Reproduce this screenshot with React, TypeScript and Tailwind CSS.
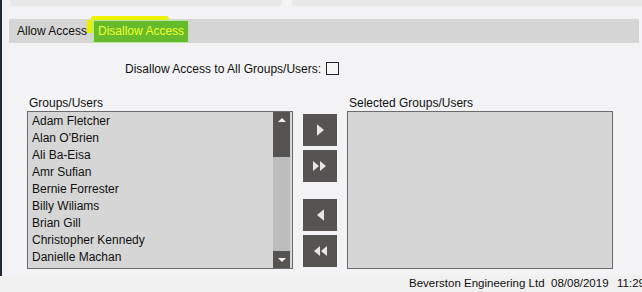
import React from "react";

const users = [
  "Adam Fletcher",
  "Alan O'Brien",
  "Ali Ba-Eisa",
  "Amr Sufian",
  "Bernie Forrester",
  "Billy Wiliams",
  "Brian Gill",
  "Christopher Kennedy",
  "Danielle Machan",
];

const MoveButton = ({ dir, double }: { dir: "right" | "left"; double?: boolean }) => {
  const single = dir === "right" ? "M0 0 L6 5 L0 10 Z" : "M6 0 L0 5 L6 10 Z";
  return (
    <button
      type="button"
      className="w-[34px] h-[32px] bg-[#565452] flex items-center justify-center"
    >
      {double ? (
        <svg width="14" height="10" viewBox="0 0 14 10">
          {dir === "right" ? (
            <>
              <path d="M0 0 L6 5 L0 10 Z" fill="#e6e6e6" />
              <path d="M7 0 L13 5 L7 10 Z" fill="#e6e6e6" />
            </>
          ) : (
            <>
              <path d="M7 0 L1 5 L7 10 Z" fill="#e6e6e6" />
              <path d="M14 0 L8 5 L14 10 Z" fill="#e6e6e6" />
            </>
          )}
        </svg>
      ) : (
        <svg width="7" height="12" viewBox="0 0 6 10">
          <path d={single} fill="#e6e6e6" />
        </svg>
      )}
    </button>
  );
};

export default function App() {
  return (
    <div
      className="w-[642px] h-[292px] flex flex-col bg-[#f3f3f5] text-[12px] text-[#111]"
      style={{ fontFamily: '"Liberation Sans", Arial, sans-serif' }}
    >
      <div className="h-[276px] border-l-2 border-[#1e2a35] flex flex-col">
        <div className="flex gap-[10px] pl-[8px]">
          <div className="w-[272px] h-[6px] bg-[#e8e8e8] rounded-b-[3px]" />
          <div className="flex-1 h-[6px] bg-[#e8e8e8] rounded-bl-[3px]" />
        </div>

        <div className="ml-[7px] mr-[3px] mt-[13px] h-[24px] bg-[#d5d5d5] flex items-end relative">
          <div className="absolute left-[82px] top-[-3px] w-[78px] h-[4px] bg-[#eef200] rounded-t-[3px]" />
          <div className="absolute left-[78px] top-[1px] w-[6px] h-[13px] bg-[#e6ef00]" />
          <span className="pl-[8px] pr-[6px] leading-[24px]">Allow Access</span>
          <div className="relative h-[23px] px-[4px] bg-[#66bb2c] border border-[#b9e6a0] text-[#f2ff2a] leading-[21px]">
            Disallow Access
          </div>
        </div>

        <div className="flex pl-[123px] mt-[17px] items-center">
          <span>Disallow Access to All Groups/Users:</span>
          <span className="ml-[5px] w-[13px] h-[13px] border border-[#222] bg-[#f7f7f7] mb-[1px]" />
        </div>

        <div className="flex mt-[18px] pl-[25px]">
          <div className="flex flex-col">
            <span className="pl-[2px] leading-[15px]">Groups/Users</span>
            <div className="w-[266px] h-[158px] border border-[#6b6b6b] bg-[#d6d6d6] flex">
              <ul className="flex-1 pl-[4px] pt-[1px]">
                {users.map((u) => (
                  <li key={u} className="leading-[17px]">
                    {u}
                  </li>
                ))}
              </ul>
              <div className="w-[17px] mr-[2px] bg-[#bdbdbd] flex flex-col justify-between">
                <div className="h-[45px] bg-[#555452] flex justify-center pt-[6px]">
                  <svg width="8" height="4" viewBox="0 0 8 4">
                    <path d="M0 4 L4 0 L8 4 Z" fill="#f0f0f0" />
                  </svg>
                </div>
                <div className="h-[17px] bg-[#555452] flex justify-center items-center">
                  <svg width="8" height="4" viewBox="0 0 8 4">
                    <path d="M0 0 L4 4 L8 0 Z" fill="#f0f0f0" />
                  </svg>
                </div>
              </div>
            </div>
          </div>

          <div className="flex flex-col ml-[10px] pt-[18px]">
            <MoveButton dir="right" />
            <div className="mt-[4px]">
              <MoveButton dir="right" double />
            </div>
            <div className="mt-[17px]">
              <MoveButton dir="left" />
            </div>
            <div className="mt-[4px]">
              <MoveButton dir="left" double />
            </div>
          </div>

          <div className="flex flex-col ml-[10px]">
            <span className="pl-[2px] leading-[15px]">Selected Groups/Users</span>
            <div className="w-[266px] h-[158px] border border-[#6b6b6b] bg-[#d6d6d6]" />
          </div>
        </div>
      </div>

      <div className="h-[16px] bg-[#f0f0f0] flex items-center pl-[409px] text-[11.5px] whitespace-nowrap overflow-hidden">
        <span className="w-[142px] shrink-0">Beverston Engineering Ltd</span>
        <span className="w-[66px] shrink-0">08/08/2019</span>
        <span className="shrink-0">11:29</span>
      </div>
    </div>
  );
}
